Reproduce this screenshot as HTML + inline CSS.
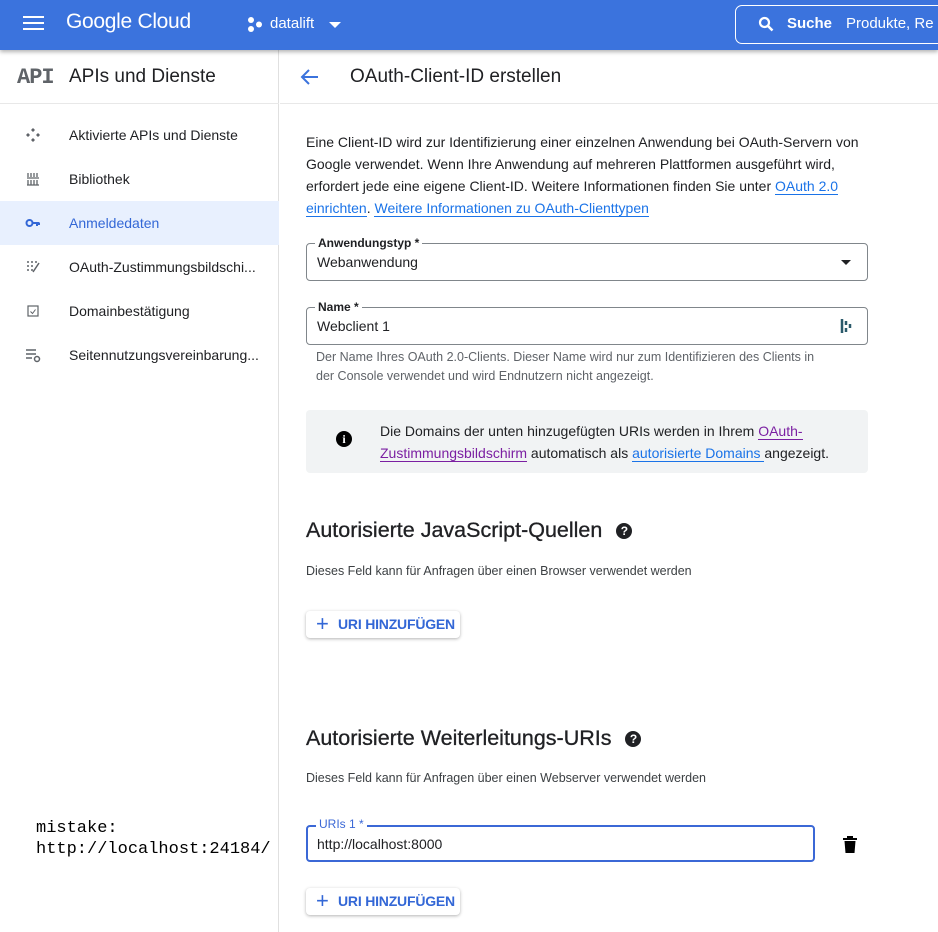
<!DOCTYPE html>
<html><head><meta charset="utf-8"><style>
*{box-sizing:border-box;margin:0;padding:0}
body{width:938px;height:932px;overflow:hidden;background:#fff;font-family:"Liberation Sans",sans-serif;color:#202124;position:relative}
.abs{position:absolute}
.hdr{left:0;top:0;width:938px;height:50px;background:#3b73dd;box-shadow:0 2px 4px rgba(0,0,0,.3);z-index:2;overflow:hidden}
.side{left:0;top:50px;width:279px;height:882px;border-right:1px solid #e0e0e0}
.nav{position:absolute;left:0;width:279px;height:44px;font-size:14px;line-height:44px;padding-left:69px;color:#202124}
.nav.sel{background:#e8f0fe;color:#3367d6}
.ic{position:absolute;left:25px;top:14px;width:16px;height:16px}
p.t{font-size:14px;line-height:22px;color:#202124}
a{color:#1a73e8;text-decoration:none;border-bottom:1px solid #1a73e8}
a.v{color:#7b1fa2;border-color:#7b1fa2}
.box{border:1px solid #80868b;border-radius:4px}
.lbl{position:absolute;top:-9px;left:8px;background:#fff;padding:0 3px;font-size:12px;font-weight:bold;line-height:16px}
.btn{height:27px;border-radius:4px;box-shadow:0 1px 3px rgba(0,0,0,.3);font-size:14px;color:#3367d6;font-weight:bold;line-height:27px;padding-left:32px;letter-spacing:-.2px}
.btn:before{content:"+";position:absolute;left:10px;top:-1px;font-size:22px;font-weight:normal}
h2{font-size:21.5px;font-weight:normal;color:#202124;-webkit-text-stroke:.3px #202124;white-space:nowrap}
.sub{font-size:12.5px;color:#3c4043}
.q{display:inline-block;width:16px;height:16px;border-radius:50%;background:#202124;color:#fff;font-size:12px;font-weight:bold;text-align:center;line-height:16px;vertical-align:2px;margin-left:14px;-webkit-text-stroke:0}
</style></head><body>
<div class="abs hdr">
  <div class="abs" style="left:23px;top:16px;width:21px;height:2px;background:#fff;box-shadow:0 6px 0 #fff,0 12px 0 #fff"></div>
  <div class="abs" style="left:66px;top:10px;font-size:21px;color:#fff;letter-spacing:-.3px">Google Cloud</div>
  <svg class="abs" style="left:247px;top:16px" width="16" height="17" viewBox="0 0 16 17"><circle cx="4" cy="4" r="3" fill="#fff"/><circle cx="4" cy="13" r="3" fill="#fff"/><circle cx="12" cy="8.5" r="3" fill="#fff"/></svg>
  <div class="abs" style="left:270px;top:15px;font-size:15px;color:#fff">datalift</div>
  <div class="abs" style="left:329px;top:22px;border:6px solid transparent;border-top:6px solid #fff;border-bottom:0"></div>
  <div class="abs" style="left:735px;top:5px;width:220px;height:39px;border:1px solid #fff;border-radius:7px"></div>
  <svg class="abs" style="left:758px;top:16px" width="16" height="16" viewBox="0 0 16 16"><circle cx="6.5" cy="6.5" r="4.5" stroke="#fff" stroke-width="2.2" fill="none"/><path d="M10 10l4.5 4.5" stroke="#fff" stroke-width="2.5"/></svg>
  <div class="abs" style="left:787px;top:15px;font-size:15px;color:#fff;font-weight:bold">Suche</div>
  <div class="abs" style="left:846px;top:15px;font-size:15px;color:#fff;white-space:nowrap">Produkte, Re</div>
</div>
<div class="abs side">
  <div class="abs" style="left:17px;top:15px;font-family:'Liberation Mono',monospace;font-weight:bold;font-size:22px;color:#5f6368;letter-spacing:-1px">API</div>
  <div class="abs" style="left:69px;top:16px;font-size:19px">APIs und Dienste</div>
  <div class="abs" style="left:0;top:53px;width:279px;height:1px;background:#e8e8e8"></div>
  <div class="nav" style="top:63px"><svg class="ic" viewBox="0 0 16 16"><path d="M8 1l2 2-2 2-2-2zM8 11l2 2-2 2-2-2zM1 8l2-2 2 2-2 2zM11 8l2-2 2 2-2 2z" fill="#5f6368"/></svg>Aktivierte APIs und Dienste</div>
  <div class="nav" style="top:107px"><svg class="ic" viewBox="0 0 16 16"><path d="M3 2v4M6 2v4M9 2v4M12 2v4M2 7h12M3 9v5M6 9v5M9 9v5M12 9v5M2 14h12" stroke="#5f6368" stroke-width="1.3"/></svg>Bibliothek</div>
  <div class="nav sel" style="top:151px"><svg class="ic" viewBox="0 0 16 16"><circle cx="4.5" cy="8" r="3" stroke="#3367d6" stroke-width="2" fill="none"/><path d="M7.5 8h7M12 8v3M14 8v2" stroke="#3367d6" stroke-width="2"/></svg>Anmeldedaten</div>
  <div class="nav" style="top:195px"><svg class="ic" viewBox="0 0 16 16"><path d="M2 3h2M6 3h2M10 3h2M2 7h2M6 7h2M2 11h2M6 11h2M14 4l-6 9" stroke="#5f6368" stroke-width="1.5"/></svg>OAuth-Zustimmungsbildschi...</div>
  <div class="nav" style="top:239px"><svg class="ic" viewBox="0 0 16 16"><rect x="3" y="3" width="10" height="10" stroke="#5f6368" stroke-width="1.2" fill="none"/><path d="M5.5 8.5l2 2 3-4" stroke="#5f6368" stroke-width="1" fill="none"/></svg>Domainbestätigung</div>
  <div class="nav" style="top:283px"><svg class="ic" viewBox="0 0 16 16"><path d="M1 3h10M1 7h10M1 11h6" stroke="#5f6368" stroke-width="1.5"/><circle cx="12" cy="12" r="2.5" stroke="#5f6368" stroke-width="1.5" fill="none"/></svg>Seitennutzungsvereinbarung...</div>
</div>
<div class="abs" style="left:280px;top:103px;width:658px;height:1px;background:#e8e8e8"></div>
<svg class="abs" style="left:300px;top:68px" width="20" height="18" viewBox="0 0 20 18"><path d="M18 9H3M9 2L2 9l7 7" stroke="#3b73dd" stroke-width="2" fill="none"/></svg>
<div class="abs" style="left:350px;top:66px;font-size:19px">OAuth-Client-ID erstellen</div>

<p class="abs t" style="left:306px;top:131px;width:570px">Eine Client-ID wird zur Identifizierung einer einzelnen Anwendung bei OAuth-Servern von Google verwendet. Wenn Ihre Anwendung auf mehreren Plattformen ausgeführt wird, erfordert jede eine eigene Client-ID. Weitere Informationen finden Sie unter <a>OAuth 2.0 einrichten</a>. <a>Weitere Informationen zu OAuth-Clienttypen</a></p>

<div class="abs box" style="left:306px;top:243px;width:562px;height:38px"><span class="lbl">Anwendungstyp *</span><div class="abs" style="left:10px;top:10px;font-size:14px">Webanwendung</div><div class="abs" style="left:534px;top:16px;border:5px solid transparent;border-top:5px solid #202124;border-bottom:0"></div></div>
<div class="abs box" style="left:306px;top:307px;width:562px;height:38px"><span class="lbl">Name *</span><div class="abs" style="left:10px;top:10px;font-size:14px">Webclient 1</div><svg class="abs" style="left:533px;top:10px" width="12" height="16" viewBox="0 0 12 16"><path d="M2 1v14M6 3v4M6 10v4M10 6v4" stroke="#2b5a6b" stroke-width="2.5"/></svg></div>
<div class="abs" style="left:316px;top:348px;width:505px;font-size:12.5px;line-height:19px;color:#5f6368">Der Name Ihres OAuth 2.0-Clients. Dieser Name wird nur zum Identifizieren des Clients in der Console verwendet und wird Endnutzern nicht angezeigt.</div>

<div class="abs" style="left:306px;top:410px;width:562px;height:63px;background:#f1f3f4;border-radius:4px"></div>
<div class="abs" style="left:336px;top:431px;width:16px;height:16px;border-radius:50%;background:#000;color:#fff;font-size:12px;font-weight:bold;text-align:center;line-height:16px;font-family:'Liberation Serif',serif">i</div>
<p class="abs t" style="left:380px;top:420px;width:480px;font-size:14px">Die Domains der unten hinzugefügten URIs werden in Ihrem <a class="v">OAuth-Zustimmungsbildschirm</a> automatisch als <a>autorisierte Domains </a>angezeigt.</p>

<h2 class="abs" style="left:306px;top:518px">Autorisierte JavaScript-Quellen<span class="q">?</span></h2>
<div class="abs sub" style="left:306px;top:564px">Dieses Feld kann für Anfragen über einen Browser verwendet werden</div>
<div class="abs btn" style="left:306px;top:611px;width:154px">URI HINZUFÜGEN</div>

<h2 class="abs" style="left:306px;top:726px">Autorisierte Weiterleitungs-URIs<span class="q">?</span></h2>
<div class="abs sub" style="left:306px;top:771px">Dieses Feld kann für Anfragen über einen Webserver verwendet werden</div>
<div class="abs" style="left:306px;top:825px;width:509px;height:37px;border:2.5px solid #3b68d6;border-radius:4px"><span class="lbl" style="color:#3b68d6;font-weight:normal;top:-11px">URIs 1 *</span><div class="abs" style="left:9px;top:9px;font-size:14px">http://localhost:8000</div></div>
<svg class="abs" style="left:843px;top:836px" width="14" height="17" viewBox="0 0 14 17"><path d="M0 2h14v2H0zM4 0h6v2H4zM1.5 5h11l-1 12h-9z" fill="#000"/></svg>
<div class="abs btn" style="left:306px;top:888px;width:154px">URI HINZUFÜGEN</div>

<div class="abs" style="left:36px;top:818px;font-family:'Liberation Mono',monospace;font-size:17px;line-height:21px;color:#000">mistake:<br>http://localhost:24184/</div>
</body></html>
